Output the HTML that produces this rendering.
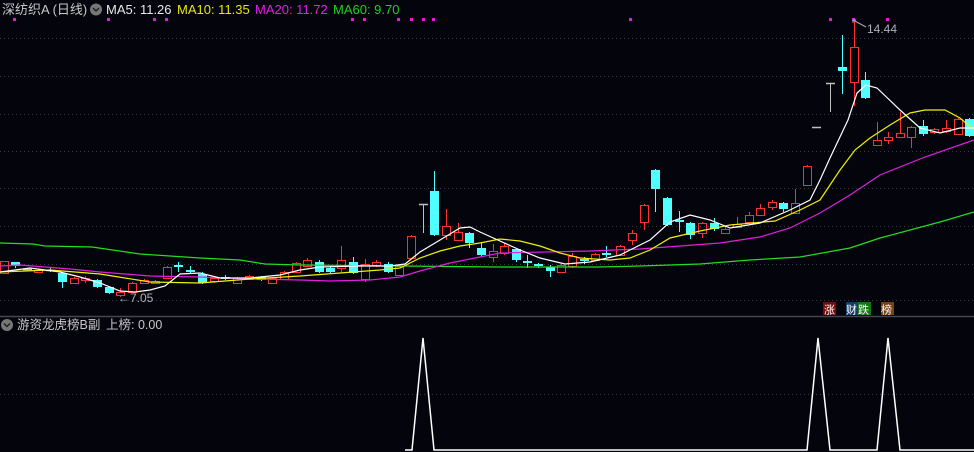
<!DOCTYPE html>
<html><head><meta charset="utf-8">
<style>
html,body{margin:0;padding:0;background:#04040c;width:974px;height:452px;overflow:hidden}
svg{display:block}
text{font-family:"Liberation Sans","Noto Sans CJK SC",sans-serif}
</style></head>
<body>
<svg id="s" width="974" height="452" viewBox="0 0 974 452" xmlns="http://www.w3.org/2000/svg">
<rect width="974" height="452" fill="#04040c"/>
<g stroke="#3a3a44" stroke-dasharray="1 3" stroke-width="1">
<line x1="0" y1="38.5" x2="974" y2="38.5"/><line x1="0" y1="76.5" x2="974" y2="76.5"/>
<line x1="0" y1="114.5" x2="974" y2="114.5"/><line x1="0" y1="151.5" x2="974" y2="151.5"/>
<line x1="0" y1="188.5" x2="974" y2="188.5"/><line x1="0" y1="226.5" x2="974" y2="226.5"/>
<line x1="0" y1="264.5" x2="974" y2="264.5"/><line x1="0" y1="300.5" x2="974" y2="300.5"/>
<line x1="0" y1="394.5" x2="974" y2="394.5"/>
</g>
<line x1="0" y1="316.5" x2="974" y2="316.5" stroke="#46464e" stroke-width="1.5"/>
<g id="cand"></g>
<g id="ma" fill="none" stroke-width="1.2"></g>
<g id="dots" fill="#e020e0"></g>
<!-- header -->
<text x="2" y="14" font-size="13" fill="#c8c8c8">深纺织A (日线)</text>
<circle cx="96" cy="9.5" r="6" fill="#777"/>
<path d="M93 8 L96 11 L99 8" stroke="#222" stroke-width="1.5" fill="none"/>
<text x="106" y="14" font-size="13" fill="#e8e8e8">MA5: 11.26</text>
<text x="177" y="14" font-size="13" fill="#e8e800">MA10: 11.35</text>
<text x="255" y="14" font-size="13" fill="#e020e0">MA20: 11.72</text>
<text x="333" y="14" font-size="13" fill="#20d020">MA60: 9.70</text>
<!-- labels -->
<path d="M853 20 L866 27" stroke="#aaa" fill="none"/>
<path d="M853 20 l3 0 M853 20 l0 3" stroke="#aaa"/>
<text x="867" y="33" font-size="12" fill="#b0b0b8">14.44</text>
<text x="118" y="302" font-size="12" fill="#b0b0b8">←7.05</text>
<!-- badges -->
<rect x="823" y="302" width="13" height="13" fill="#7a0a0a"/><text x="824" y="313.5" font-size="11" fill="#fff">涨</text>
<rect x="846" y="302" width="12" height="13" fill="#133f6a"/><text x="846" y="313.5" font-size="11" fill="#fff">财</text>
<rect x="858" y="302" width="13" height="13" fill="#107a10"/><text x="858" y="313.5" font-size="11" fill="#fff">跌</text>
<rect x="881" y="302" width="13" height="13" fill="#7a4210"/><text x="881" y="313.5" font-size="11" fill="#fff">榜</text>
<!-- sub panel -->
<circle cx="7" cy="325" r="6" fill="#777"/>
<path d="M4 323.5 L7 326.5 L10 323.5" stroke="#222" stroke-width="1.5" fill="none"/>
<text x="17" y="329" font-size="12.5" fill="#c8c8c8">游资龙虎榜B副</text>
<text x="106" y="329" font-size="12.5" fill="#c8c8c8">上榜: 0.00</text>
<polyline fill="none" stroke="#fff" stroke-width="1.5" points="405,450 412,450 423,338 434,450 807,450 818,338 830,450 877,450 888,338 900,450 974,450"/>
</svg>
<script>
var C=[
[4,261,273,261,273,'r',1],[15,262,266,262,268,'c'],[27,269,270,268,271,'g'],[38,270,272,269,273,'r'],[50,270,271,268,272,'g'],
[62,273,282,272,288,'c'],[74,278,283,277,284,'r'],[85,278,280,276,283,'r'],[97,280,287,279,288,'c'],[109,287,293,286,294,'c'],
[120,292,295,288,297,'r'],[132,283,292,282,293,'r'],[144,280,283,279,284,'r'],[155,281,283,280,284,'r'],[167,267,278,266,279,'r'],
[178,265,266,262,272,'c'],[190,270,271,266,273,'c'],[202,274,283,272,284,'c'],[214,278,281,277,283,'r'],[225,277,278,275,280,'c'],
[237,278,283,277,284,'r'],[249,276,279,275,280,'r'],[261,277,280,276,281,'c'],[272,278,283,277,284,'r'],[284,272,279,271,280,'r'],
[296,263,272,262,273,'r'],[307,260,266,258,267,'r'],[319,262,272,260,273,'c'],[330,268,272,266,273,'c'],[341,260,268,246,272,'r'],
[353,262,273,257,274,'c'],[365,264,279,259,282,'r'],[376,262,265,260,267,'r'],[388,264,272,262,273,'c'],[399,266,275,265,276,'r'],
[411,236,258,235,259,'r'],[423,204,204,204,233,'g',1],[434,191,235,171,236,'c'],[446,226,235,209,240,'r'],[458,232,240,223,241,'r'],
[469,233,243,232,248,'c'],[481,248,255,242,257,'c'],[493,251,257,244,262,'r'],[504,246,253,243,255,'r'],[516,249,260,248,262,'c'],
[527,261,263,255,268,'c'],[538,264,266,263,268,'c'],[550,267,271,265,277,'c'],[561,265,272,264,273,'r'],[572,256,266,253,268,'r'],
[584,259,260,257,264,'c'],[595,254,260,253,261,'r'],[606,253,254,246,257,'c'],[620,246,255,245,256,'r'],[632,233,240,230,245,'r'],
[644,205,222,204,230,'r'],[655,170,189,169,212,'c'],[667,198,225,197,226,'c'],[679,220,222,211,232,'c'],[690,223,235,222,239,'c'],
[702,223,233,222,238,'r'],[714,223,229,218,231,'c'],[725,229,233,226,234,'r'],[737,224,227,217,228,'r'],[749,215,222,212,225,'r'],
[760,208,215,204,216,'r'],[772,202,207,200,210,'r'],[783,203,209,202,212,'c'],[795,203,213,189,214,'r'],[807,166,185,165,186,'r'],
[816,127,127,127,127,'g',1],[830,83,83,83,112,'g',1],[842,67,71,35,94,'c'],[854,47,82,20,106,'r'],[865,80,98,72,99,'c'],
[877,140,145,122,146,'r'],[888,137,140,132,144,'r'],[900,133,137,112,138,'r'],[911,127,137,126,148,'r'],[923,126,134,120,136,'c'],
[934,129,132,128,134,'r'],[946,128,131,120,133,'r'],[958,119,134,118,135,'r'],[969,119,136,118,137,'c']];
var h='';
C.forEach(function(c){var x=c[0],t=c[1],b=c[2],hi=c[3],lo=c[4],k=c[5];
if(k=='r'){h+='<line x1="'+x+'.5" y1="'+hi+'" x2="'+x+'.5" y2="'+t+'" stroke="#ff3030"/><line x1="'+x+'.5" y1="'+b+'" x2="'+x+'.5" y2="'+lo+'" stroke="#ff3030"/>';
var bh=Math.max(b-t,2);h+='<rect x="'+(x-4)+'.5" y="'+t+'.5" width="8" height="'+bh+'" fill="none" stroke="#ff3030"/>';}
else if(k=='c'){h+='<line x1="'+x+'.5" y1="'+hi+'" x2="'+x+'.5" y2="'+lo+'" stroke="#50ffff"/>';h+='<rect x="'+(x-4)+'" y="'+t+'" width="9" height="'+Math.max(b-t,2)+'" fill="#50ffff"/>';}
else {h+='<line x1="'+x+'.5" y1="'+hi+'" x2="'+x+'.5" y2="'+lo+'" stroke="#c0c0c0"/><line x1="'+(x-4)+'" y1="'+t+'.5" x2="'+(x+5)+'" y2="'+t+'.5" stroke="#c0c0c0" stroke-width="1.5"/>';}
});
document.getElementById('cand').innerHTML=h;
var M={
'#20e020':[[0,243],[33,244],[45,246],[92,247],[140,254],[200,258],[240,260],[265,264],[300,265],[400,266],[500,267],[600,267],[640,266],[700,264],[750,260],[800,257],[850,248],[880,238],[940,222],[974,212]],
'#e020e0':[[0,266],[20,265],[45,267],[70,269],[100,272],[150,276],[200,277],[250,279],[300,280],[330,281],[370,280],[400,277],[420,271],[450,263],[500,253],[590,251],[640,249],[680,246],[720,243],[760,237],[790,228],[820,213],[850,195],[880,175],[925,157],[974,140]],
'#f0f000':[[0,272],[50,270],[100,274],[150,282],[200,283],[250,279],[300,276],[340,273],[380,270],[400,268],[420,258],[440,251],[460,246],[480,243],[500,239],[520,241],[540,246],[560,253],[580,258],[610,260],[630,258],[650,250],[670,238],[700,231],[730,225],[775,221],[800,210],[820,200],[840,170],[855,150],[870,138],[890,125],[910,113],[925,110],[945,110],[960,118],[974,130]],
'#ffffff':[[0,272],[30,268],[60,272],[80,277],[100,283],[120,291],[135,292],[150,290],[165,286],[180,274],[200,273],[220,278],[250,278],[280,275],[300,270],[320,267],[360,266],[390,266],[405,264],[420,252],[440,240],[460,228],[470,227],[480,232],[500,241],[520,250],[540,258],[565,264],[590,262],[620,255],[650,240],[670,222],[690,215],[710,220],[730,228],[760,223],[790,210],[810,200],[820,180],[830,158],[848,120],[857,93],[866,85],[877,88],[900,110],[920,128],[940,133],[960,128],[974,128]]};
var mh='';for(var c in M){mh+='<polyline stroke="'+c+'" points="'+M[c].map(function(p){return p.join(',')}).join(' ')+'"/>';}
document.getElementById('ma').innerHTML=mh;
var D=[14,108,154,166,352,364,398,411,423,433,630,830,853,887],dh='';
D.forEach(function(x){dh+='<rect x="'+(x-1)+'" y="18" width="3" height="3"/>';});
document.getElementById('dots').innerHTML=dh;
</script>
</body></html>
